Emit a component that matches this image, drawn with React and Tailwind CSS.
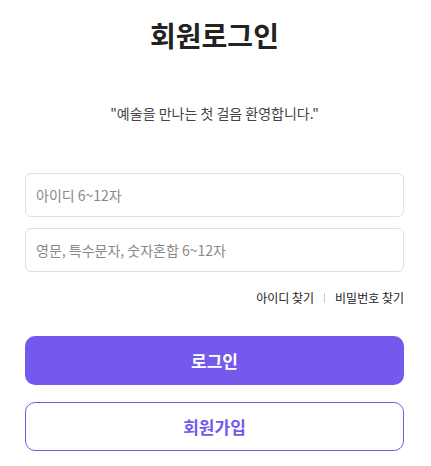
export default function App() {
  const font = { fontFamily: '"Noto Sans CJK KR", "Noto Sans", sans-serif' };
  return (
    <div className="w-full bg-white" style={font}>
      <div className="mx-auto w-[431px] pl-[25px] pr-[27px] pt-[16px] pb-[15px] flex flex-col">
        <h1 className="text-center text-[28px] leading-[38px] font-bold text-[#222]">회원로그인</h1>
        <p className="mt-[48px] text-center text-[14px] leading-[22px] text-[#444]">"예술을 만나는 첫 걸음 환영합니다."</p>
        <div className="mt-[49px] flex flex-col gap-[11px]">
          <input
            className="h-[44px] w-full rounded-[6px] border border-[#e0e0e0] px-[10px] text-[14px] text-[#333] placeholder:text-[#888] outline-none"
            placeholder="아이디 6~12자"
            style={font}
          />
          <input
            type="text"
            className="h-[44px] w-full rounded-[6px] border border-[#e0e0e0] px-[10px] text-[14px] text-[#333] placeholder:text-[#888] outline-none"
            placeholder="영문, 특수문자, 숫자혼합 6~12자"
            style={font}
          />
        </div>
        <div className="mt-[16px] flex items-center justify-end text-[12px] leading-[20px] font-normal text-[#222]">
          <span>아이디 찾기</span>
          <span className="mx-[10px] h-[10px] w-px bg-[#ccc]"></span>
          <span>비밀번호 찾기</span>
        </div>
        <button className="mt-[28px] h-[49px] w-full rounded-[10px] bg-[#7459ec] text-[17px] font-bold text-white" style={font}>
          로그인
        </button>
        <button className="mt-[17px] h-[49px] w-full rounded-[10px] border border-[#7459ec] bg-white text-[17px] font-bold text-[#7459ec]" style={font}>
          회원가입
        </button>
      </div>
    </div>
  );
}
